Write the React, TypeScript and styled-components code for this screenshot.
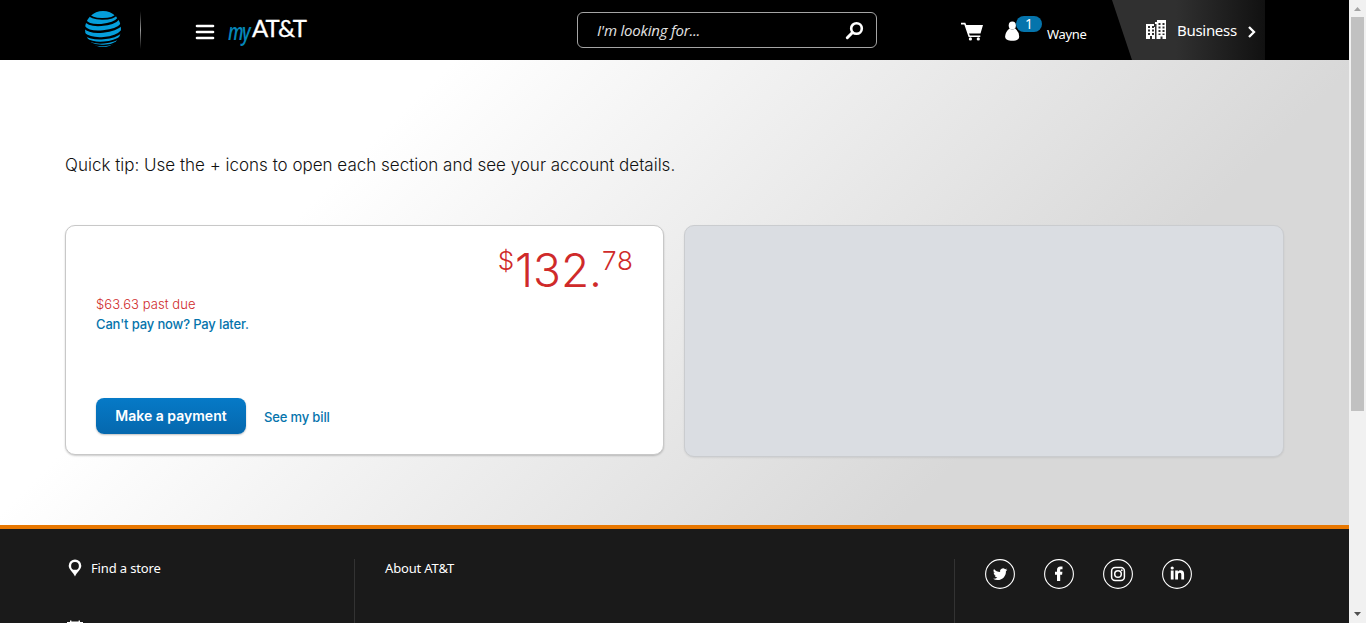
import React from 'react';
import styled, { createGlobalStyle } from 'styled-components';

const GlobalStyle = createGlobalStyle`
  * { box-sizing: border-box; }
  body { margin: 0; background: #1a1a1a; overflow: hidden; font-family: "Noto Sans", sans-serif; }
`;

const Window = styled.div`
  display: flex;
  height: 623px;
  overflow: hidden;
`;
const Page = styled.div`
  display: flex;
  flex-direction: column;
  width: 1349px;
`;
const Header = styled.header`
  display: flex;
  align-items: flex-start;
  height: 60px;
  background: #000;
  color: #fff;
`;
const Globe = styled.svg`
  width: 38px;
  height: 38px;
  margin: 10px 0 0 84px;
`;
const Divider = styled.div`
  width: 1px;
  height: 38px;
  margin: 11px 0 0 18px;
  background: linear-gradient(#000, #999 50%, #000);
`;
const Burger = styled.button`
  display: flex;
  flex-direction: column;
  gap: 4px;
  width: 18px;
  padding: 0;
  border: 0;
  margin: 25px 0 0 55px;
  background: none;
`;
const Bar = styled.span`
  height: 2px;
  border-radius: 1px;
  background: #fff;
  box-shadow: 0 0 0 0.3px #fff;
`;
const Brand = styled.div`
  display: flex;
  width: 81px;
  height: 36px;
  margin: 12px 0 0 14px;
  white-space: nowrap;
`;
const My = styled.span`
  width: 24px;
  font: italic 600 22px/36px "Open Sans", sans-serif;
  letter-spacing: -2px;
  color: #0586b8;
  transform: scale(0.8, 1.1);
  transform-origin: 0 50%;
`;
const Att = styled.span`
  font: 400 24px/32px Lato, sans-serif;
  letter-spacing: -1.1px;
  -webkit-text-stroke: 0.3px #fff;
`;
const Search = styled.div`
  display: flex;
  align-items: center;
  justify-content: space-between;
  width: 300px;
  height: 36px;
  margin: 12px 0 0 268px;
  padding: 0 12px 0 19px;
  border: 1px solid #a5a5a5;
  border-radius: 6px;
`;
const Placeholder = styled.span`
  font: italic 15px/20px "Open Sans", sans-serif;
  letter-spacing: -0.2px;
  color: #e4e4e4;
`;
const Cart = styled.svg`
  width: 24px;
  height: 20px;
  margin: 22px 0 0 83px;
`;
const Person = styled.svg`
  width: 17px;
  height: 21px;
  margin: 21px 0 0 20px;
`;
const Count = styled.span`
  width: 26px;
  height: 16px;
  margin: 16px 0 0 -5px;
  border-radius: 8px;
  background: #0574ac;
  font: 14px/16px "Noto Sans", sans-serif;
  text-align: center;
`;
const UserName = styled.span`
  width: 65px;
  margin: 26px 0 0 5px;
  font: 13px/17px "Noto Sans", sans-serif;
  letter-spacing: -0.3px;
`;
const Business = styled.div`
  display: flex;
  align-items: center;
  width: 153px;
  height: 60px;
  padding-left: 34px;
  background: linear-gradient(90deg, #303030 0 42%, #111 100%);
  clip-path: polygon(0 0, 100% 0, 100% 100%, 20px 100%);
`;
const BusinessLabel = styled.span`
  margin: 0 9px 0 11px;
  width: 61px;
  font: 15px/20px "Noto Sans", sans-serif;
  letter-spacing: -0.3px;
`;
const Chevron = styled.svg`
  width: 10px;
  height: 14px;
  margin-top: 3px;
`;
const Main = styled.main`
  height: 465px;
  padding: 93px 65px 0;
  background: linear-gradient(135deg, #fff 25%, #d8d8d8 75%);
`;
const Tip = styled.p`
  margin: 0;
  font: 300 17px/24px Inter, sans-serif;
  letter-spacing: 0;
  color: #111;
  white-space: nowrap;
`;
const Cards = styled.div`
  display: flex;
  align-items: flex-start;
  gap: 20px;
  margin-top: 48px;
`;
const Card = styled.section<{ $muted?: boolean }>`
  flex: none;
  width: ${p => (p.$muted ? 600 : 599)}px;
  height: ${p => (p.$muted ? 232 : 230)}px;
  padding: 14px 30px;
  border: 1px solid ${p => (p.$muted ? '#cacccf' : '#c8c8c8')};
  border-radius: 10px;
  background: ${p => (p.$muted ? '#dadde2' : '#fff')};
  box-shadow: 0 1px 2px rgba(0, 0, 0, ${p => (p.$muted ? 0.08 : 0.2)});
`;
const Amount = styled.div`
  display: flex;
  justify-content: flex-end;
  height: 54px;
  color: #cf2a2a;
  white-space: nowrap;
`;
const Dollars = styled.span`
  font: 300 46px/60px Inter, sans-serif;
`;
const Small = styled.span`
  font: 300 26px/42px Inter, sans-serif;
  letter-spacing: 0.8px;
  &:last-child { margin-right: -0.8px; }
`;
const PastDue = styled.div`
  font: 300 13px/20px Inter, sans-serif;
  letter-spacing: 0.06px;
  color: #cf2a2a;
`;
const Link = styled.a`
  display: block;
  font: 500 13px/20px Inter, sans-serif;
  letter-spacing: -0.15px;
  color: #0574ac;
  white-space: nowrap;
`;
const Actions = styled.div`
  display: flex;
  align-items: flex-start;
  gap: 18px;
  margin-top: 64px;
  ${Link} { margin-top: 9px; }
`;
const PayButton = styled.button`
  width: 150px;
  height: 36px;
  padding: 0;
  border: 0;
  border-radius: 8px;
  background: linear-gradient(#067ac7, #0568ae);
  box-shadow: 0 1px 2px rgba(0, 0, 0, 0.25);
  font: 600 14px/36px Inter, sans-serif;
  color: #fff;
  white-space: nowrap;
`;
const Footer = styled.footer`
  display: flex;
  height: 98px;
  padding: 30px 65px 0;
  border-top: 4px solid #e87700;
  background: #1a1a1a;
  color: #fff;
  overflow: hidden;
`;
const FooterColumn = styled.div<{ $width: number }>`
  flex: none;
  width: ${p => p.$width}px;
  height: 90px;
  border-right: 1px solid #333;
`;
const FooterLink = styled.a<{ $indent?: number }>`
  display: flex;
  align-items: flex-start;
  height: 61px;
  padding-left: ${p => p.$indent ?? 0}px;
  font: 13px/19px "Noto Sans", sans-serif;
  letter-spacing: -0.15px;
`;
const Pin = styled.svg`
  width: 14px;
  height: 18px;
  margin-right: 9px;
`;
const Calendar = styled.svg`
  display: block;
  width: 16px;
  height: 16px;
  margin-left: 2px;
`;
const Social = styled.div`
  display: flex;
  gap: 29px;
  margin-left: 30px;
`;
const SocialIcon = styled.svg`
  width: 30px;
  height: 30px;
`;
const Scrollbar = styled.div`
  display: flex;
  flex-direction: column;
  align-items: center;
  justify-content: space-between;
  width: 17px;
  background: #f1f1f1;
`;
const Thumb = styled.div`
  width: 13px;
  height: 394px;
  margin-bottom: 195px;
  background: #c1c1c1;
`;
const Arrow = styled.svg`
  flex: none;
  width: 17px;
  height: 17px;
`;

export default function App() {
  return (
    <Window>
      <GlobalStyle />
      <Page>
        <Header>
          <Globe viewBox="0 0 38 38" fill="none" stroke="#000">
            <circle cx="19" cy="19" r="18" fill="#059fdb" stroke="none" />
            <path d="M5 4C7 10 28 11 33 4" strokeWidth="1.8" />
            <path d="M1 10C5 18 29 16 35 8" strokeWidth="2.2" />
            <path d="M0 17C6 25 32 22 38 14" strokeWidth="2.4" />
            <path d="M0 24C9 31 31 29 38 21" strokeWidth="2.3" />
            <path d="M2 29C11 35 29 33 37 27" strokeWidth="2" />
            <path d="M6 33C14 37 26 36 33 32" strokeWidth="1.4" />
          </Globe>
          <Divider />
          <Burger aria-label="Menu"><Bar /><Bar /><Bar /></Burger>
          <Brand><My>my</My><Att>AT&amp;T</Att></Brand>
          <Search>
            <Placeholder>I'm looking for...</Placeholder>
            <svg width="19" height="19" viewBox="0 0 19 19" fill="none" stroke="#fff" strokeWidth="2.6" strokeLinecap="round">
              <circle cx="11.5" cy="7.5" r="5.3" />
              <path d="M7.5 11.5L2.3 16.7" strokeWidth="3" />
            </svg>
          </Search>
          <Cart viewBox="0 0 24 20" fill="#fff">
            <path d="M1 .8H5.3L6.3 3H23L20.5 11.5H9L9.8 13.4H20.3V15H8.6L4.3 2.4H1Z" />
            <circle cx="10.4" cy="16.9" r="1.6" /><circle cx="18.3" cy="16.9" r="1.6" />
          </Cart>
          <Person viewBox="0 0 17 21" fill="#fff">
            <ellipse cx="8.3" cy="4.6" rx="3.6" ry="4" />
            <path d="M5.5 7.5Q8.3 9.5 11.2 7.5Q15.2 11 15.2 15.5C15.2 18.7 12.1 19.8 8.2 19.8S1.1 18.7 1.1 15.5Q1.3 11 5.5 7.5Z" />
          </Person>
          <Count>1</Count>
          <UserName>Wayne</UserName>
          <Business>
            <svg width="20" height="20" viewBox="0 0 20 20" fill="#fff" fillRule="evenodd">
              <path d="M0 4H8V7H9V19H6V16H4V19H0ZM2 6V8H4V6ZM6 6V8H8V6ZM2 9.5V11.5H4V9.5ZM6 9.5V11.5H8V9.5ZM2 13V15H4V13ZM6 13V15H8V13Z" />
              <path d="M9 2H11V0H20V19H16.5V16.5H14.5V19H10.5V4H9ZM12.5 3V5H14.5V3ZM16.5 3V5H18.5V3ZM12.5 6.5V8.5H14.5V6.5ZM16.5 6.5V8.5H18.5V6.5ZM12.5 10V12H14.5V10ZM16.5 10V12H18.5V10ZM12.5 13.5V15H14.5V13.5ZM16.5 13.5V15H18.5V13.5Z" />
            </svg>
            <BusinessLabel>Business</BusinessLabel>
            <Chevron viewBox="0 0 10 14" fill="none" stroke="#fff" strokeWidth="2.3">
              <path d="M2 2L7 7L2 12" />
            </Chevron>
          </Business>
        </Header>
        <Main>
          <Tip>Quick tip: Use the + icons to open each section and see your account details.</Tip>
          <Cards>
            <Card>
              <Amount><Small>$</Small><Dollars>132.</Dollars><Small>78</Small></Amount>
              <PastDue>$63.63 past due</PastDue>
              <Link>Can't pay now? Pay later.</Link>
              <Actions>
                <PayButton>Make a payment</PayButton>
                <Link>See my bill</Link>
              </Actions>
            </Card>
            <Card $muted />
          </Cards>
        </Main>
        <Footer>
          <FooterColumn $width={290}>
            <FooterLink $indent={3}>
              <Pin viewBox="0 0 14 18" fill="#fff" fillRule="evenodd">
                <path d="M7 .5A6.3 6.3 0 0 1 13.3 6.8C13.3 10.5 9.2 12.8 7 17.5C4.8 12.8.7 10.5.7 6.8A6.3 6.3 0 0 1 7 .5ZM7 3A3.9 3.9 0 1 0 7 10.8A3.9 3.9 0 0 0 7 3Z" />
              </Pin>
              Find a store
            </FooterLink>
            <Calendar viewBox="0 0 16 16" fill="#fff"><path d="M0 2H3V.4H4.4V1.4H11.6V.4H13V2H16V16H0Z" /></Calendar>
          </FooterColumn>
          <FooterColumn $width={600}>
            <FooterLink $indent={30}>About AT&amp;T</FooterLink>
          </FooterColumn>
          <Social>
            <SocialIcon viewBox="0 0 30 30">
              <circle cx="15" cy="15" r="14.4" fill="none" stroke="#fff" strokeWidth="1.1" />
              <path fill="#fff" transform="translate(8 8) scale(.6)" d="M23.95 4.57a10 10 0 0 1-2.82.77 4.96 4.96 0 0 0 2.16-2.72c-.95.55-2 .95-3.13 1.18a4.92 4.92 0 0 0-8.38 4.48C7.69 8.1 4.07 6.13 1.64 3.16a4.92 4.92 0 0 0 1.52 6.57 4.9 4.9 0 0 1-2.23-.61v.06a4.92 4.92 0 0 0 3.95 4.83 5 5 0 0 1-2.21.08 4.94 4.94 0 0 0 4.6 3.42A9.87 9.87 0 0 1 0 19.54a14 14 0 0 0 7.55 2.21c9.05 0 14-7.5 14-13.98 0-.21 0-.42-.02-.63a9.94 9.94 0 0 0 2.42-2.57Z" />
            </SocialIcon>
            <SocialIcon viewBox="0 0 30 30">
              <circle cx="15" cy="15" r="14.4" fill="none" stroke="#fff" strokeWidth="1.1" />
              <path fill="#fff" d="M13 22V15.7H11V12.8H13V11C13 8.6 14.2 7.4 16.3 7.4H18.5V10.2H17.1C16.4 10.2 16.2 10.6 16.2 11.2V12.8H18.4L18.1 15.7H16.2V22Z" />
            </SocialIcon>
            <SocialIcon viewBox="0 0 30 30" fill="none" stroke="#fff">
              <circle cx="15" cy="15" r="14.4" strokeWidth="1.1" />
              <rect x="8.6" y="8.6" width="12.8" height="12.8" rx="3.5" strokeWidth="1.5" />
              <circle cx="15" cy="15" r="3.3" strokeWidth="1.5" />
              <circle cx="18.8" cy="11.2" r=".9" fill="#fff" stroke="none" />
            </SocialIcon>
            <SocialIcon viewBox="0 0 30 30" fill="#fff">
              <circle cx="15" cy="15" r="14.4" fill="none" stroke="#fff" strokeWidth="1.1" />
              <circle cx="10.2" cy="9" r="1.6" />
              <path d="M8.8 11.5H11.6V20.5H8.8ZM13.2 11.5H15.9V12.8C16.6 11.7 17.5 11.3 18.7 11.3C21.2 11.3 22.1 12.8 22.1 15.2V20.5H19.3V15.8C19.3 14.4 18.9 13.7 17.8 13.7C16.6 13.7 16 14.5 16 15.8V20.5H13.2Z" />
            </SocialIcon>
          </Social>
        </Footer>
      </Page>
      <Scrollbar>
        <Arrow viewBox="0 0 17 17" fill="#a3a3a3"><path d="M5 11H12L8.5 7Z" /></Arrow>
        <Thumb />
        <Arrow viewBox="0 0 17 17" fill="#505050"><path d="M5 6H12L8.5 10Z" /></Arrow>
      </Scrollbar>
    </Window>
  );
}
